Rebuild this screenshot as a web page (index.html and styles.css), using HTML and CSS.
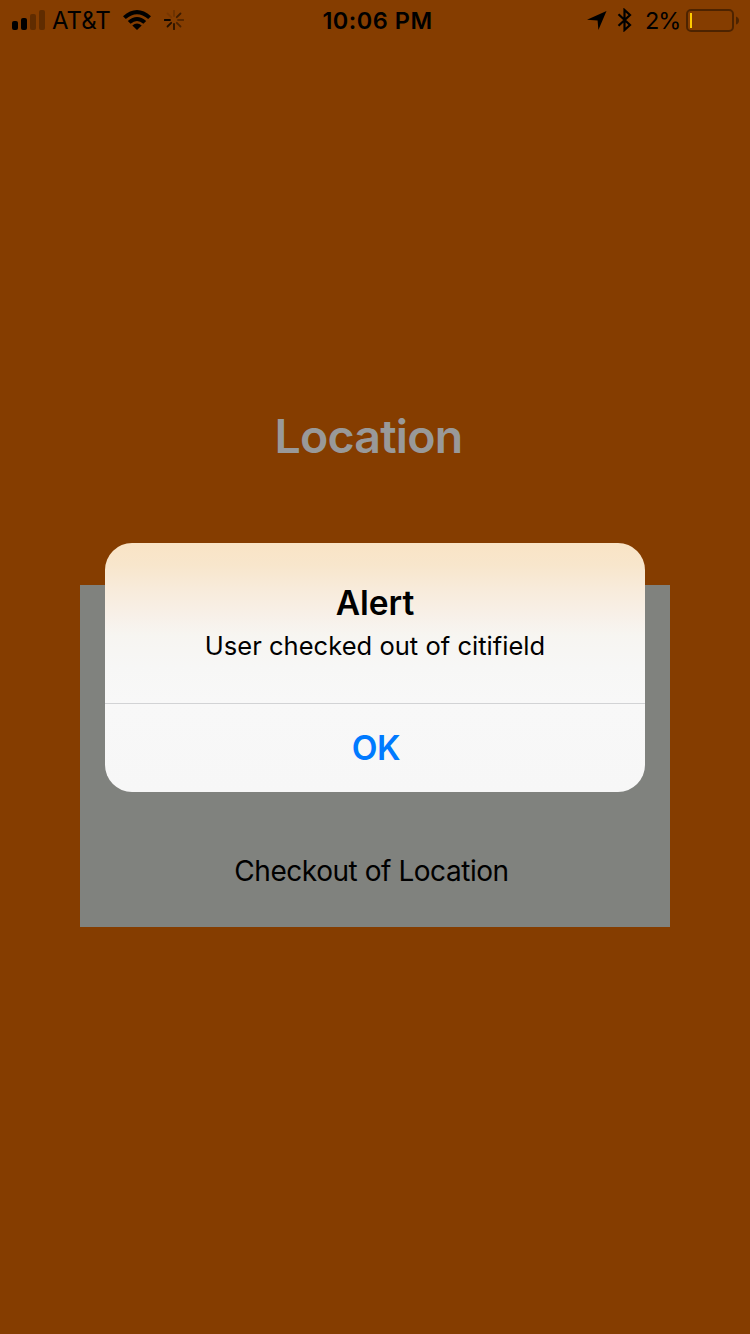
FILE: index.html
```html
<!DOCTYPE html>
<html lang="en">
<head>
<meta charset="utf-8">
<title>Location</title>
<link rel="stylesheet" href="styles.css">
</head>
<body>
<div class="screen">
  <header class="status">
    <div class="status-left">
      <svg class="signal" width="34" height="20" viewBox="0 0 34 20">
        <rect x="0" y="11" width="6" height="9" rx="2"/>
        <rect x="9" y="8" width="6" height="12" rx="2"/>
        <rect class="faint" x="18" y="4" width="6" height="16" rx="2"/>
        <rect class="faint" x="27" y="0" width="6" height="20" rx="2"/>
      </svg>
      <span class="carrier">AT&amp;T</span>
      <svg class="wifi" width="28" height="20" viewBox="0 0 28 20">
        <path d="M0 6.2Q14 -6.2 28 6.2L25.2 9.1Q14 -.8 2.8 9.1Z"/>
        <path d="M4.8 11Q14 2.8 23.2 11L20.4 13.8Q14 8.3 7.6 13.8Z"/>
        <path d="M9.3 15.4Q14 11.6 18.7 15.4L14 20Z"/>
      </svg>
      <svg class="spinner" width="20" height="20" viewBox="-10 -10 20 20">
        <path opacity=".18" d="M0-4V-9.3"/>
        <path opacity=".55" d="M2.8-2.8L6.5-6.5"/>
        <path opacity=".35" d="M4 0H9.3"/>
        <path opacity=".45" d="M2.8 2.8L6.5 6.5"/>
        <path opacity=".7" d="M0 4V9.3"/>
        <path opacity=".75" d="M-2.8 2.8L-6.5 6.5"/>
        <path opacity=".9" d="M-4 0H-9.3"/>
        <path opacity=".1" d="M-2.8-2.8L-6.5-6.5"/>
      </svg>
    </div>
    <span class="clock">10:06 PM</span>
    <div class="status-right">
      <svg class="arrow" width="20" height="20" viewBox="0 0 20 20"><path d="M19.5 1L11.4 20L10.6 10.4L0 9.8Z"/></svg>
      <svg class="bluetooth" width="16" height="24" viewBox="0 0 16 24"><path d="M1.5 6.2L13 17L7.5 22V2L13 7L1.5 17.8"/></svg>
      <span class="percent">2%</span>
      <svg class="battery" width="53" height="24" viewBox="0 0 53 24">
        <rect class="shell" x="1" y="2" width="46" height="21" rx="4"/>
        <rect class="charge" x="4" y="5" width="2" height="15"/>
        <path class="cap" d="M50 8.5Q53 9.5 53 12.5T50 16.5Z"/>
      </svg>
    </div>
  </header>
  <main class="content">
    <h1 class="heading">Location</h1>
    <section class="panel"><span class="checkout">Checkout of Location</span></section>
  </main>
  <div class="alert" role="alertdialog">
    <div class="alert-body">
      <h2 class="alert-title">Alert</h2>
      <p class="alert-text">User checked out of citifield</p>
    </div>
    <button class="alert-ok">OK</button>
  </div>
</div>
</body>
</html>
```
FILE: styles.css
```css
* { box-sizing: border-box; }
body { margin: 0; font-family: Inter, "Liberation Sans", sans-serif; color: #000; }
.screen { position: relative; width: 750px; height: 1334px; background: #853d00; overflow: hidden; }
.status { height: 40px; display: grid; grid-template: 40px / 1fr auto 1fr; align-items: center; padding: 0 11px 0 12px; font-size: 24px; line-height: 38px; white-space: nowrap; }
.status-left, .status-right { display: flex; align-items: center; height: 40px; }
.status-right { justify-content: flex-end; }
.status svg { flex: none; display: block; }
.faint { opacity: .28; }
.carrier { width: 59px; margin-left: 6px; padding-top: 2px; }
.wifi { margin-left: 12px; }
.spinner { margin-left: 13px; fill: none; stroke: #000; stroke-width: 1.8; stroke-linecap: round; }
.clock { font-weight: 600; font-size: 23.5px; letter-spacing: .5px; padding: 2px 0 0 4px; }
.arrow { margin-right: 10px; }
.bluetooth { margin-right: 12px; fill: none; stroke: #000; stroke-width: 2.2; }
.percent { width: 41px; padding-top: 2px; font-size: 23.5px; letter-spacing: -1px; }
.shell { fill: none; stroke: #000; stroke-opacity: .42; stroke-width: 2; }
.charge { fill: #ffcc00; }
.cap { fill-opacity: .42; }
.content { display: flex; flex-direction: column; padding: 369px 80px 0; }
.heading { margin: 0 0 122px; padding-right: 13px; height: 54px; line-height: 54px; font-size: 46.5px; letter-spacing: -.8px; font-weight: 600; text-align: center; color: #999; }
.panel { height: 342px; display: flex; align-items: flex-end; justify-content: center; padding: 0 7px 36px 0; background: #80827e; }
.checkout { font-size: 28px; letter-spacing: -.45px; line-height: 40px; white-space: nowrap; }
.alert { position: absolute; left: 105px; top: 543px; width: 540px; height: 249px; border-radius: 27px; overflow: hidden; display: flex; flex-direction: column; background: linear-gradient(#f9e4c6 0, #f8e6cc 22px, #f8ecdd 50px, #f8f0e8 72px, #f7f5f1 92px, #f7f7f6 125px, #f8f8f8 160px, #f7f7f7 100%); }
.alert-body { height: 161px; border-bottom: 1px solid #d2d3d5; padding-top: 40px; text-align: center; }
.alert-title { margin: 0; font-size: 33.5px; line-height: 40px; font-weight: 600; }
.alert-text { margin: 5px 0 0; font-size: 25.5px; letter-spacing: .03px; line-height: 36px; white-space: nowrap; }
.alert-ok { flex: 1; border: 0; padding: 0 0 0 2px; background: none; font: 600 33.5px Inter, "Liberation Sans", sans-serif; letter-spacing: -.3px; color: #007aff; }
```
